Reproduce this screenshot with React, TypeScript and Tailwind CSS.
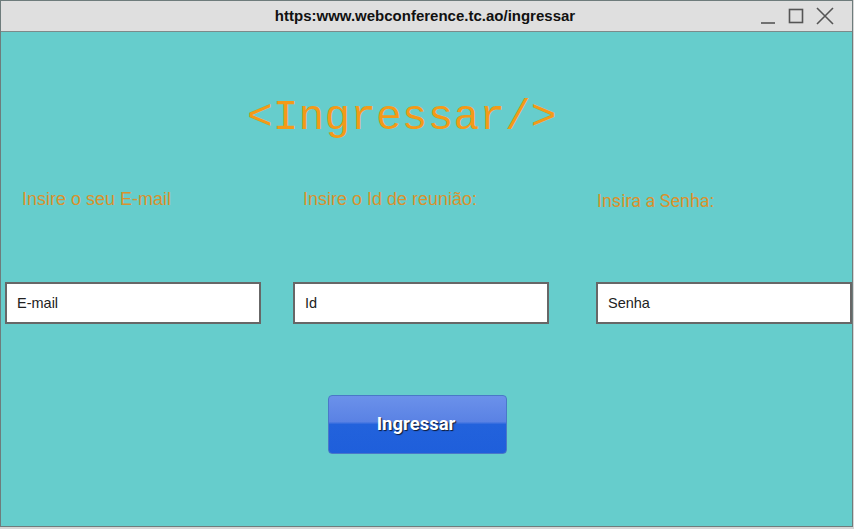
import { useState } from "react";

const fields = [
  { label: "Insire o seu E-mail", placeholder: "E-mail", labelClass: "ml-[17px] mt-[1px] font-['Liberation_Sans',Arial,sans-serif]" },
  { label: "Insire o Id de reunião:", placeholder: "Id", labelClass: "ml-[10px] mt-[1px] font-['Liberation_Sans',Arial,sans-serif]" },
  { label: "Insira a Senha:", placeholder: "Senha", labelClass: "ml-[1px] mt-[3px] font-['Roboto',sans-serif]" },
];

const WindowControls = () => (
  <div className="absolute right-[18px] top-[6px] flex items-end gap-[12px] text-[#555]">
    <svg width="16" height="18" viewBox="0 0 16 18">
      <line x1="1" y1="16" x2="15" y2="16" stroke="currentColor" strokeWidth="1.6" />
    </svg>
    <svg width="16" height="18" viewBox="0 0 16 18">
      <rect x="1.5" y="2.5" width="13" height="13" fill="none" stroke="currentColor" strokeWidth="1.6" />
    </svg>
    <svg width="18" height="18" viewBox="0 0 18 18">
      <path d="M1 1 L17 17 M17 1 L1 17" stroke="currentColor" strokeWidth="1.6" />
    </svg>
  </div>
);

export default function App() {
  const [values, setValues] = useState(["", "", ""]);

  return (
    <div className="w-[854px] h-[529px] bg-[#d6d6d6] overflow-hidden">
      <div className="w-[853px] h-[527px] border border-[#6e7c7c] flex flex-col">
        <div className="relative h-[31px] bg-[#dfdfdf] border-b border-[#7c8a8a] flex items-center justify-center">
          <span className="text-[15px] font-bold text-[#111] font-['Liberation_Sans',Arial,sans-serif] pr-[3px]">
            https:www.webconference.tc.ao/ingressar
          </span>
          <WindowControls />
        </div>

        <div className="flex-1 bg-[#66cdcc] flex flex-col">
          <h1 className="mt-[64px] ml-[246px] text-[43px] leading-none text-[#f39a18] font-['Liberation_Mono','Courier_New',monospace] font-normal">
            &lt;Ingressar/&gt;
          </h1>

          <div className="mt-[48px] flex pl-[4px] gap-[32px]">
            {fields.map((f, i) => (
              <div key={f.placeholder} className={"w-[256px] flex flex-col " + (i === 2 ? "ml-[15px]" : "")}>
                <span className={"text-[18px] leading-[22px] text-[#d9922e] " + f.labelClass}>{f.label}</span>
              </div>
            ))}
          </div>

          <div className="mt-[70px] flex pl-[4px] gap-[32px]">
            {fields.map((f, i) => (
              <input
                key={f.placeholder}
                value={values[i]}
                onChange={(e) => setValues(values.map((v, j) => (j === i ? e.target.value : v)))}
                placeholder={f.placeholder}
                className={
                  "w-[256px] h-[42px] bg-white border-2 border-[#676767] px-[10px] text-[14.5px] text-[#222] placeholder:text-[#222] outline-none font-['Liberation_Sans',Arial,sans-serif] " +
                  (i === 2 ? "ml-[15px]" : "")
                }
              />
            ))}
          </div>

          <div className="mt-[71px] ml-[327px]">
            <button className="w-[179px] h-[59px] rounded-[4px] border border-[#4a78c8] bg-[linear-gradient(to_bottom,#6b91ea_0%,#5a82e4_45%,#2262dc_50%,#1f5fdb_100%)] text-white text-[18.5px] font-bold font-['Roboto',sans-serif] [text-shadow:1px_1px_1px_#101a33] pr-[3px]">
              Ingressar
            </button>
          </div>
        </div>
      </div>
    </div>
  );
}
